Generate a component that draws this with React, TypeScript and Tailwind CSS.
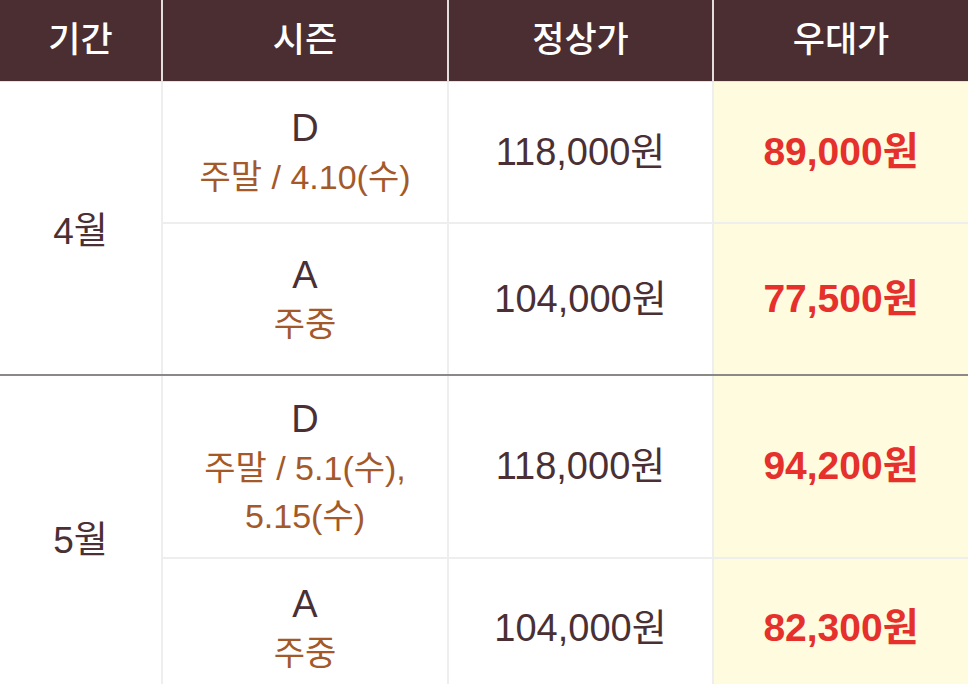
const font = { fontFamily: '"Liberation Sans", "Noto Sans CJK KR", sans-serif' };

type Row = { season: string; sub: string[]; normal: string; deal: string; h: string };

const groups: { month: string; rows: Row[] }[] = [
  {
    month: '4월',
    rows: [
      { season: 'D', sub: ['주말 / 4.10(수)'], normal: '118,000원', deal: '89,000원', h: 'h-[140px]' },
      { season: 'A', sub: ['주중'], normal: '104,000원', deal: '77,500원', h: 'h-[152px]' },
    ],
  },
  {
    month: '5월',
    rows: [
      { season: 'D', sub: ['주말 / 5.1(수),', '5.15(수)'], normal: '118,000원', deal: '94,200원', h: 'h-[181px]' },
      { season: 'A', sub: ['주중'], normal: '104,000원', deal: '82,300원', h: 'h-[140px]' },
    ],
  },
];

function Header() {
  const cols = ['기간', '시즌', '정상가', '우대가'];
  return (
    <div className="grid h-[82px] grid-cols-[161px_286px_265px_256px] border-b border-[#e6e1e1] bg-white">
      {cols.map((c, i) => (
        <div
          key={c}
          className={`flex items-center justify-center bg-[#4b2e31] text-[35px] font-medium text-white ${i > 0 ? 'border-l-2 border-[#e4dede]' : ''}`}
        >
          {c}
        </div>
      ))}
    </div>
  );
}

export default function App() {
  return (
    <div className="h-[684px] w-[968px] overflow-hidden bg-white text-[#4a3034]" style={font}>
      <Header />
      {groups.map((g, gi) => (
        <div key={g.month} className={`flex ${gi > 0 ? 'border-t-2 border-[#8d8888]' : ''}`}>
          {/* Month */}
          <div className="flex w-[161px] shrink-0 items-center justify-center pt-[8px] text-[37px]">{g.month}</div>
          <div className="flex flex-1 flex-col">
            {g.rows.map((r, ri) => (
              <div
                key={ri}
                className={`grid grid-cols-[286px_265px_256px] ${r.h} ${ri > 0 ? 'border-t-2 border-[#eeeeee]' : ''}`}
              >
                <div className="flex flex-col items-center justify-center border-l-2 border-[#eeeeee] leading-[50px]">
                  <span className="text-[38px]">{r.season}</span>
                  {r.sub.map((s) => (
                    <span key={s} className="text-[34px] leading-[48px] text-[#a3592a]">
                      {s}
                    </span>
                  ))}
                </div>
                <div className="flex items-center justify-center border-l-2 border-[#eeeeee] text-[38px]">
                  {r.normal}
                </div>
                <div className="flex items-center justify-center border-l-2 border-[#eeeeee] bg-[#fefbdf] text-[39px] font-bold text-[#e5302b]">
                  {r.deal}
                </div>
              </div>
            ))}
          </div>
        </div>
      ))}
    </div>
  );
}
